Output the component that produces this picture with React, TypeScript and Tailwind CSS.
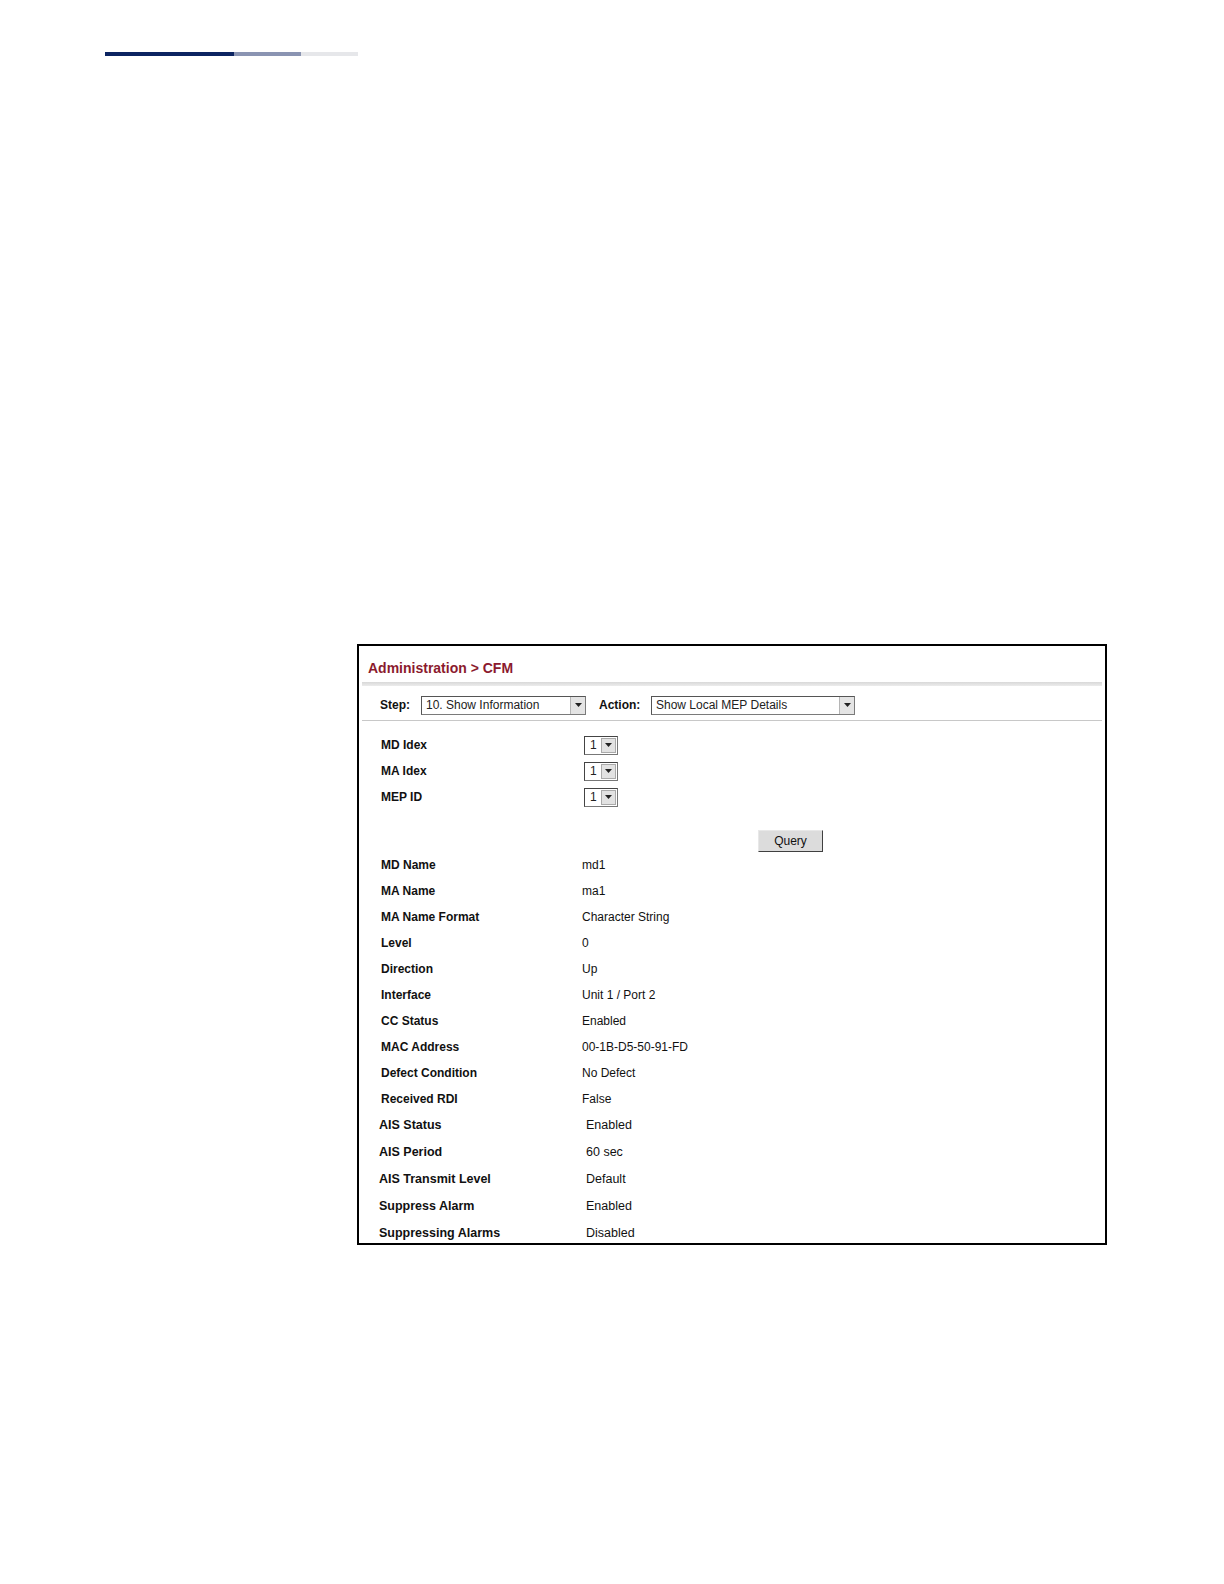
import React from "react";

const font = { fontFamily: '"Liberation Sans", Arial, sans-serif' };

const Arrow = () => (
  <div className="w-[15px] h-full bg-[#e4e4e4] border-l border-[#b5b5b5] flex items-center justify-center">
    <svg width="7" height="4" viewBox="0 0 7 4">
      <path d="M0 0 L7 0 L3.5 4 Z" fill="#222" />
    </svg>
  </div>
);

const Select = ({ value, width }: { value: string; width: string }) => (
  <div
    className={`${width} h-[19px] flex border border-[#7a7a7a] border-t-[#555] border-l-[#555] bg-white`}
  >
    <div className="flex-1 px-[4px] text-[12px] leading-[17px] text-[#222] whitespace-nowrap overflow-hidden">
      {value}
    </div>
    <Arrow />
  </div>
);

const SmallSelect = () => (
  <div className="w-[34px] h-[19px] flex border border-[#777] border-t-[#444] border-l-[#444] bg-white p-[1px]">
    <div className="flex-1 text-[12px] leading-[15px] pl-[4px] text-[#222]">1</div>
    <div className="w-[15px] h-full bg-[#e2e2e2] border border-[#aaa] flex items-center justify-center">
      <svg width="7" height="4" viewBox="0 0 7 4">
        <path d="M0 0 L7 0 L3.5 4 Z" fill="#222" />
      </svg>
    </div>
  </div>
);

const details: [string, string][] = [
  ["MD Name", "md1"],
  ["MA Name", "ma1"],
  ["MA Name Format", "Character String"],
  ["Level", "0"],
  ["Direction", "Up"],
  ["Interface", "Unit 1 / Port 2"],
  ["CC Status", "Enabled"],
  ["MAC Address", "00-1B-D5-50-91-FD"],
  ["Defect Condition", "No Defect"],
  ["Received RDI", "False"],
];

const aisRows: [string, string][] = [
  ["AIS Status", "Enabled"],
  ["AIS Period", "60 sec"],
  ["AIS Transmit Level", "Default"],
  ["Suppress Alarm", "Enabled"],
  ["Suppressing Alarms", "Disabled"],
];

export default function App() {
  return (
    <div className="w-full h-screen overflow-hidden bg-white" style={font}>
      {/* header rule */}
      <div className="pt-[52px] pl-[105px] flex">
        <div className="w-[129px] h-[4px] bg-[#0c2461]" />
        <div className="w-[67px] h-[4px] bg-[#8a94b2]" />
        <div className="w-[57px] h-[4px] bg-[#e6e7ea]" />
      </div>

      {/* screenshot frame */}
      <div className="mt-[588px] ml-[357px] w-[750px] h-[601px] border-2 border-black overflow-hidden">
        <div className="h-[36px] pt-[14px] pl-[9px] text-[14px] leading-[16px] font-bold text-[#8b1a2e]">
          Administration &gt; CFM
        </div>
        <div className="mx-[3px] h-[4px] bg-gradient-to-b from-[#d8d8d8] to-[#ececec]" />

        <div className="h-[34px] pt-[4px] flex items-center pl-[21px] text-[12px] text-[#111]">
          <span className="font-bold w-[41px]">Step:</span>
          <Select value="10. Show Information" width="w-[165px]" />
          <span className="font-bold ml-[13px] w-[52px]">Action:</span>
          <Select value="Show Local MEP Details" width="w-[204px]" />
        </div>
        <div className="mx-[3px] h-[1px] bg-[#c8c8c8]" />

        <div className="pt-[11px] pl-[22px] text-[12px] text-[#111]">
          {["MD Idex", "MA Idex", "MEP ID"].map((l) => (
            <div key={l} className="h-[26px] flex items-center">
              <span className="w-[203px] font-bold">{l}</span>
              <SmallSelect />
            </div>
          ))}
        </div>

        <div className="h-[42px] pt-[18px] pl-[399px]">
          <button className="w-[65px] h-[22px] bg-[#dcdcdc] border border-[#e8e8e8] border-r-[#404040] border-b-[#404040] text-[12px] text-[#111] leading-[18px]">
            Query
          </button>
        </div>

        <div className="pl-[22px] text-[12px] text-[#111]">
          {details.map(([l, v]) => (
            <div key={l} className="h-[26px] flex items-center">
              <span className="w-[201px] font-bold">{l}</span>
              <span>{v}</span>
            </div>
          ))}
        </div>
        <div className="pl-[20px] text-[12.5px] text-[#111]">
          {aisRows.map(([l, v]) => (
            <div key={l} className="h-[27px] flex items-center">
              <span className="w-[207px] font-bold">{l}</span>
              <span>{v}</span>
            </div>
          ))}
        </div>
      </div>
    </div>
  );
}
